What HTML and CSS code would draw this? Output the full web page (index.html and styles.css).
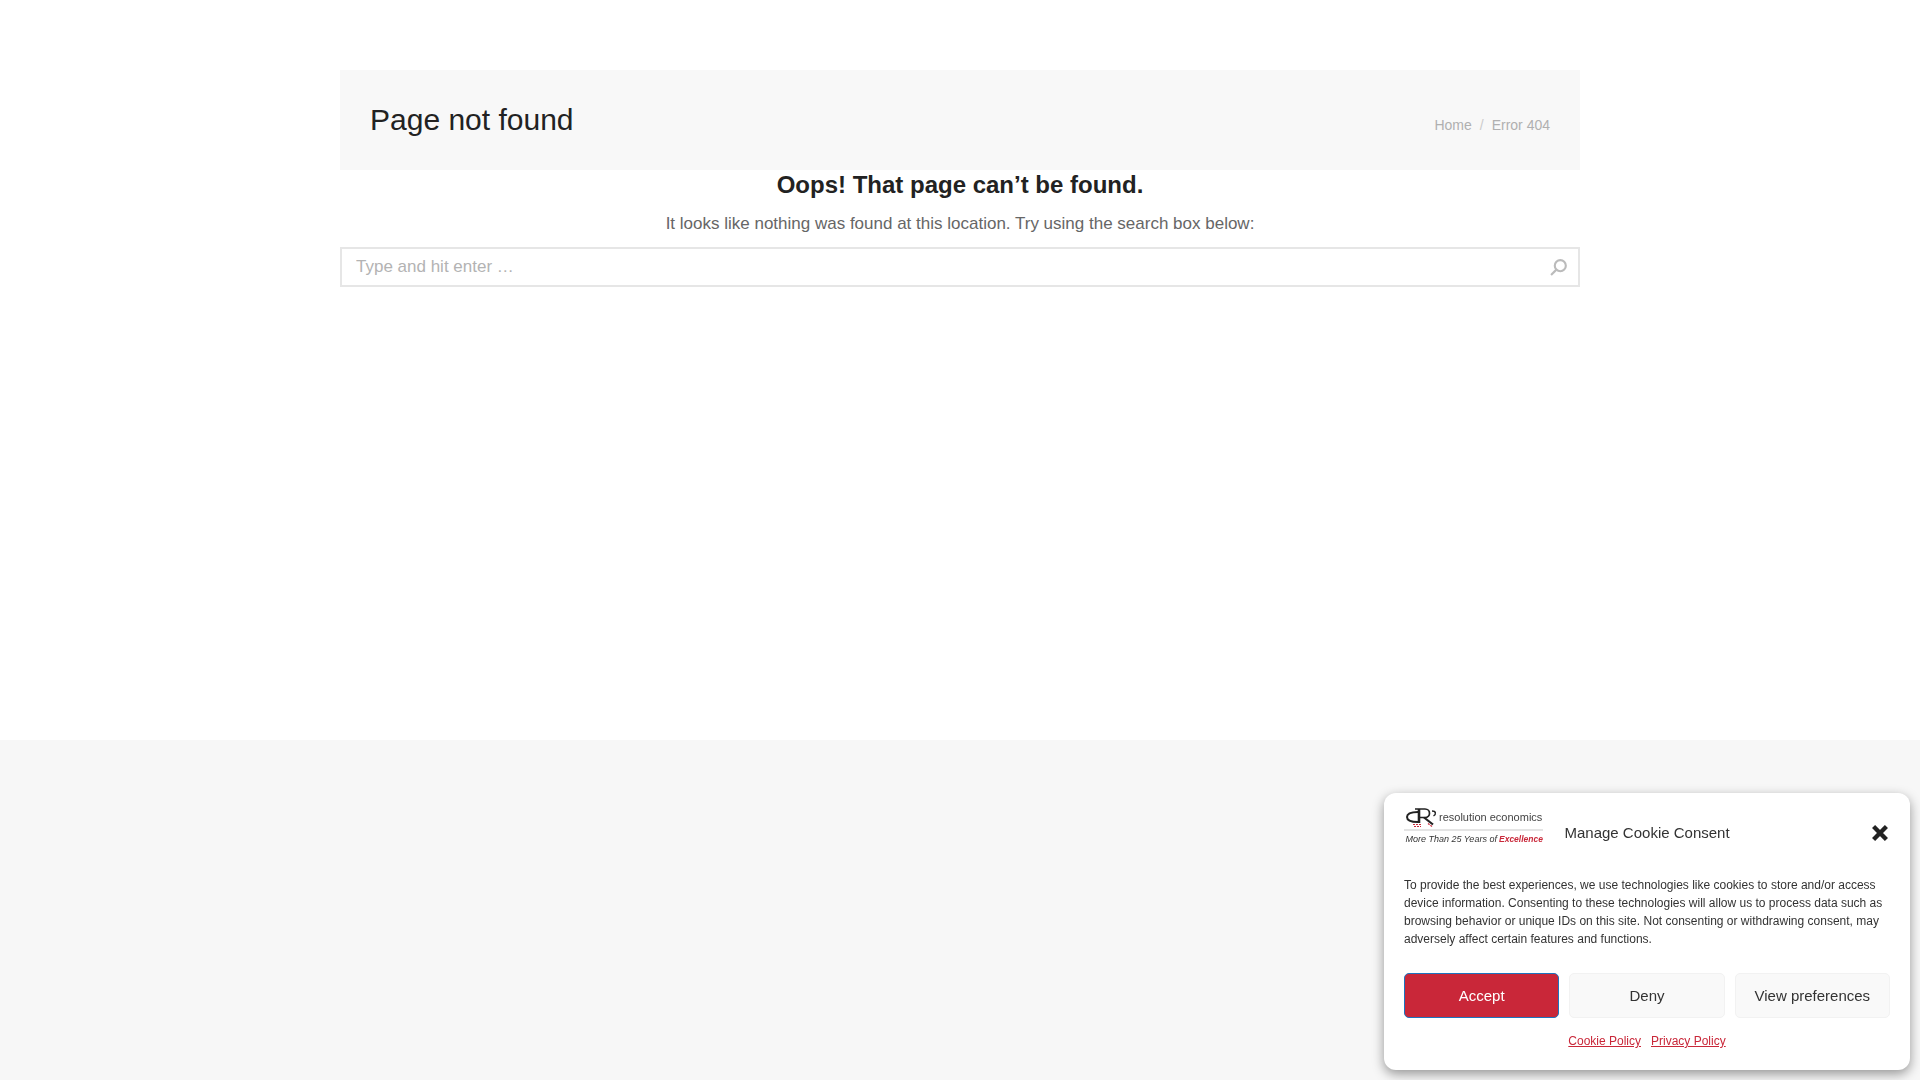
FILE: index.html
```html
<!DOCTYPE html>
<html lang="en">
<head>
<meta name="viewport" content="width=device-width, initial-scale=1">
<title>Page not found</title>
<link rel="stylesheet" href="styles.css">
</head>
<body>
<div class="page">
  <div class="title-bar">
    <h1>Page not found</h1>
    <div class="breadcrumbs"><a href="#">Home</a><span class="sep">/</span><span>Error 404</span></div>
  </div>
  <div class="content">
    <h2>Oops! That page can’t be found.</h2>
    <p>It looks like nothing was found at this location. Try using the search box below:</p>
    <form class="search">
      <input type="text" placeholder="Type and hit enter …">
      <svg class="search-icon" xmlns="http://www.w3.org/2000/svg" viewBox="0 0 16 16"><circle cx="9.700" cy="6.300" r="5.200"/><path d="M6 10 1 15"/></svg>
    </form>
  </div>
</div>
<div class="footer"></div>

<div class="cookie-box">
  <div class="cookie-head">
    <svg class="logo" xmlns="http://www.w3.org/2000/svg" viewBox="0 0 140 37">
      <g fill="none" stroke="#222">
        <path d="M14 4C7 4 3 6 3 9s4 5 11 5" stroke-width="2"/>
        <path d="M15 1v14" stroke-width="2.600"/>
        <path d="M11 1h10c6 0 6 8.500 0 8.500h-5" stroke-width="1.700"/>
        <path d="M20 9.500l9 7" stroke-width="2.200"/>
        <path d="M28 3c4 0 4.500 3 1.500 5" stroke-width="1.400"/>
      </g>
      <path d="M9 16.500h9M10 18.500h7M24 15.500l4 3" fill="none" stroke="#c9283a" stroke-width="1.100" stroke-dasharray="2 1"/>
      <text x="35" y="13" class="logo-name">resolution economics</text>
      <path d="M0 22h139" stroke="#bbb" stroke-width="0.800"/>
      <text x="1.500" y="34" class="logo-tag">More Than 25 Years of</text>
      <text x="95" y="34" class="logo-red">Excellence</text>
    </svg>
    <div class="cookie-title">Manage Cookie Consent</div>
    <svg class="close" xmlns="http://www.w3.org/2000/svg" viewBox="0 0 14 14"><path d="M2 2l10 10M12 2 2 12"/></svg>
  </div>
  <div class="cookie-text">To provide the best experiences, we use technologies like cookies to store and/or access device information. Consenting to these technologies will allow us to process data such as browsing behavior or unique IDs on this site. Not consenting or withdrawing consent, may adversely affect certain features and functions.</div>
  <div class="cookie-buttons">
    <button type="button" class="accept">Accept</button>
    <button type="button">Deny</button>
    <button type="button">View preferences</button>
  </div>
  <div class="cookie-links"><a href="#">Cookie Policy</a><a href="#">Privacy Policy</a></div>
</div>
</body>
</html>
```

FILE: styles.css
```css
html, body {
  height: 100%;
}
body {
  margin: 0;
  background-color: #fff;
  color: #666;
  font-family: "Liberation Sans", Arial, sans-serif;
  font-size: 17px;
  display: flex;
  flex-direction: column;
  overflow: hidden;
}
.page {
  width: 1240px;
  height: 740px;
  margin: 0 auto;
  padding-top: 70px;
  box-sizing: border-box;
  flex: none;
}
.title-bar {
  height: 100px;
  background-color: #f8f8f8;
  padding: 0 30px;
  display: flex;
  align-items: center;
  justify-content: space-between;
}
h1 {
  margin: 0;
  font-size: 30px;
  font-weight: normal;
  color: #222;
}
.breadcrumbs {
  font-size: 14px;
  color: #b0b0b0;
  padding-top: 10px;
}
.breadcrumbs a {
  color: #b0b0b0;
  text-decoration: none;
}
.sep {
  margin: 0 8px;
  color: #ccc;
}
.content {
  text-align: center;
}
h2 {
  margin: 0;
  font-size: 24px;
  line-height: 29px;
  color: #222;
}
.content p {
  margin: 12px 0 0;
  line-height: 25px;
}
.search {
  position: relative;
  margin-top: 11px;
}
.search input {
  display: block;
  width: 100%;
  height: 40px;
  box-sizing: border-box;
  border: 2px solid #e6e6e6;
  padding: 0 14px;
  background-color: #fff;
  font-family: inherit;
  font-size: 17px;
  color: #666;
  outline: none;
}
.search input::placeholder {
  color: #b3b3b3;
  opacity: 1;
}
.search-icon {
  position: absolute;
  right: 13px;
  top: 12px;
  width: 17px;
  height: 17px;
  fill: none;
  stroke: #bbb;
  stroke-width: 2;
}
.footer {
  flex: 1;
  background-color: #f7f7f7;
}
.cookie-box {
  position: fixed;
  right: 10px;
  bottom: 10px;
  width: 526px;
  height: 277px;
  box-sizing: border-box;
  padding: 15px 20px 0;
  background-color: #fff;
  border-radius: 12px;
  box-shadow: 0 4px 12px rgba(0, 0, 0, 0.4);
  color: #333;
  font-size: 12px;
}
.cookie-head {
  display: flex;
  align-items: center;
  height: 49px;
}
.logo {
  width: 140px;
  height: 37px;
  flex: none;
  align-self: flex-start;
}
.logo-name {
  font-family: "Liberation Sans", Arial, sans-serif;
  font-size: 11px;
  fill: #444;
}
.logo-tag {
  font-family: "Liberation Sans", Arial, sans-serif;
  font-size: 9px;
  font-style: italic;
  fill: #333;
}
.logo-red {
  font-family: "Liberation Sans", Arial, sans-serif;
  font-size: 8.500px;
  font-style: italic;
  font-weight: bold;
  fill: #c9283a;
}
.cookie-title {
  margin-left: 20.500px;
  font-size: 15px;
  color: #333;
  flex: 1;
}
.close {
  width: 18px;
  height: 18px;
  margin-right: 1px;
  fill: none;
  stroke: #222;
  stroke-width: 3.400;
}
.cookie-text {
  margin-top: 19px;
  line-height: 18px;
}
.cookie-buttons {
  display: grid;
  grid-template-columns: repeat(3, 1fr);
  gap: 10px;
  margin-top: 25px;
}
.cookie-buttons button {
  height: 45px;
  box-sizing: border-box;
  border: 1px solid #f2f2f2;
  border-radius: 5px;
  background-color: #f9f9f9;
  color: #333;
  font-family: inherit;
  font-size: 15px;
  padding: 0;
}
.cookie-buttons .accept {
  background-color: #c92739;
  border-color: #1e73be;
  color: #fff;
}
.cookie-links {
  display: flex;
  justify-content: center;
  gap: 10px;
  margin-top: 16px;
}
.cookie-links a {
  color: #c92739;
}
```
